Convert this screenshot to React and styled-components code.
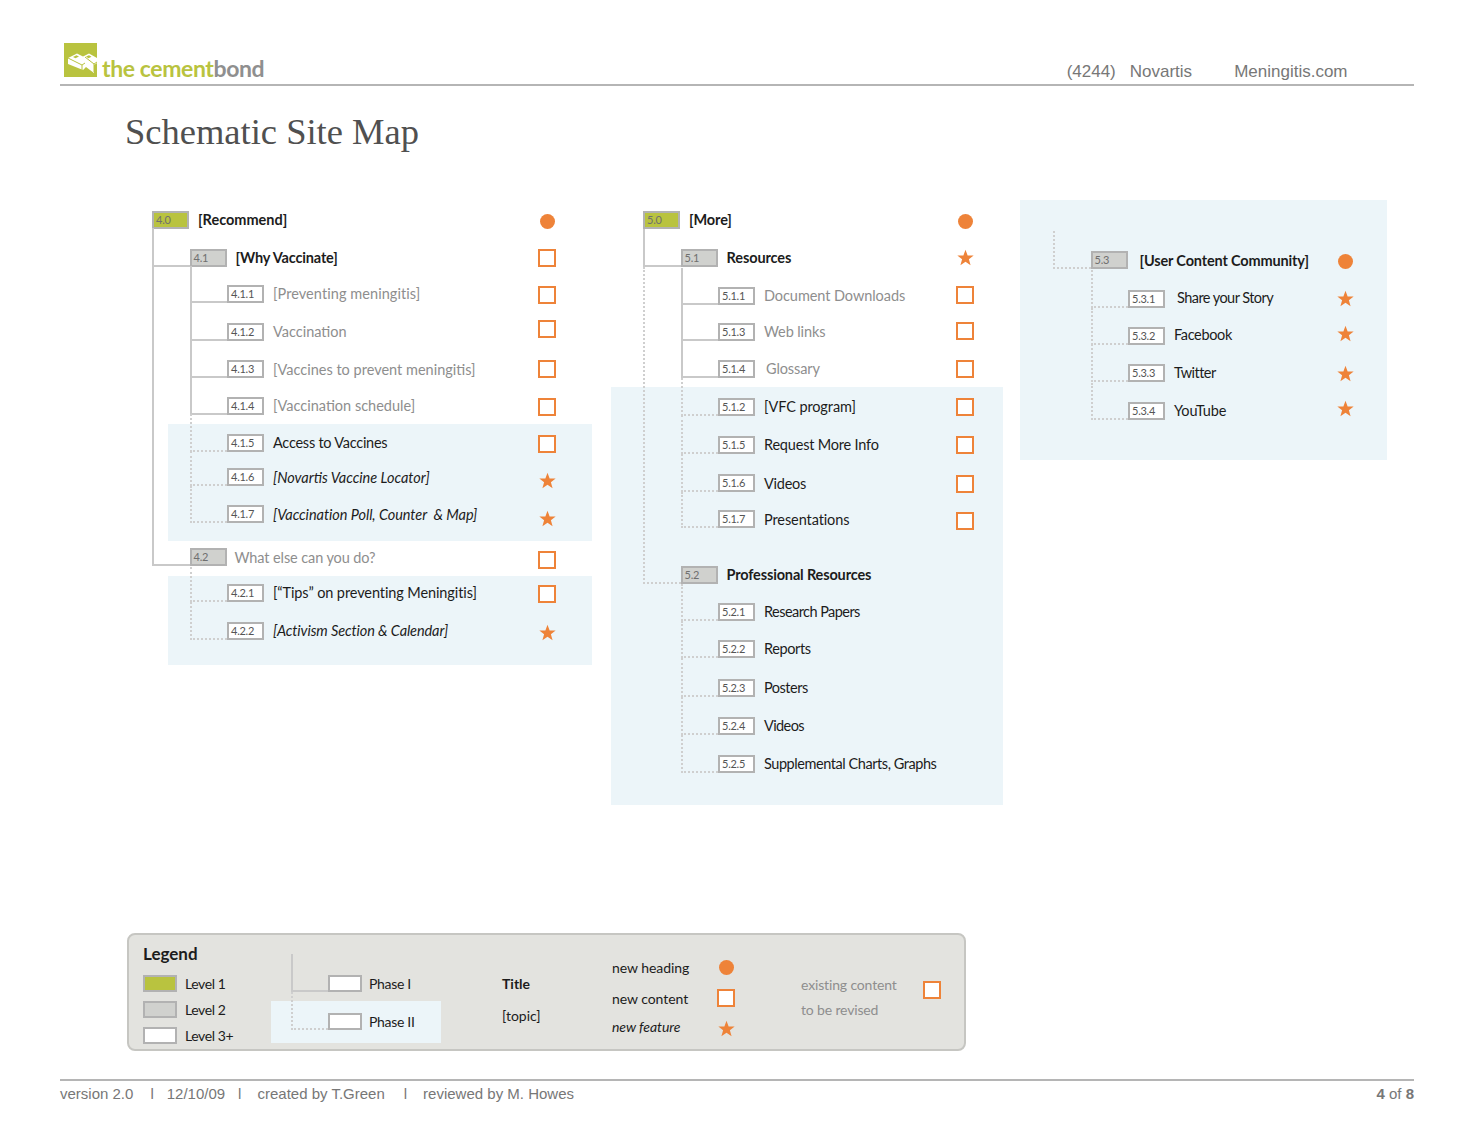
import React from 'react';
import styled, { createGlobalStyle } from 'styled-components';

const colors = {
    orange: '#ee8339',
    olive: '#b9c33f',
    shade: '#ecf5f9',
    line: '#c9c9c9',
    boxLine: '#b2b2b2',
    grey: '#8e8e8e',
    ink: '#1c1c1c',
};

const GlobalStyle = createGlobalStyle`
  html, body {
    margin: 0;
    padding: 0;
    background: #fff;
    font-family: "Lato", "Liberation Sans", sans-serif;
  }
`;

const Page = styled.div`
  width: 1480px;
  height: 1143px;
  overflow: hidden;
  padding-top: 43px;
  box-sizing: border-box;
`;

const Header = styled.header`
  margin-left: 60px;
  width: 1354px;
  height: 43px;
  box-sizing: border-box;
  border-bottom: 2px solid #b5b5b5;
  display: flex;
  justify-content: space-between;
  padding-left: 4px;
`;

const Brand = styled.div`
  display: flex;
  align-items: flex-start;
`;

const Wordmark = styled.div`
  margin: 11px 0 0 5px;
  font-family: "Lato", sans-serif;
  font-size: 23px;
  line-height: 28px;
  font-weight: 700;
  letter-spacing: -0.4px;
  color: ${colors.olive};
  span {
    color: #8f8f8f;
  }
`;

const Project = styled.div`
  display: flex;
  padding: 18px 66.5px 0 0;
  font-family: "Liberation Sans", sans-serif;
  font-size: 17px;
  line-height: 22px;
  color: #777;
`;

const ProjectItem = styled.span`
  margin-left: ${(props) => props.$gap}px;
`;

const Title = styled.h1`
  margin: 19px 0 0 125px;
  font-family: "Liberation Serif", serif;
  font-weight: 400;
  font-size: 36.5px;
  line-height: 54px;
  color: #505050;
`;

const MapArea = styled.main`
  margin: 41px 0 0 152px;
  height: 733px;
  display: flex;
  align-items: flex-start;
`;

const Column = styled.section`
  width: ${(props) => props.$width}px;
  margin-left: ${(props) => props.$left}px;
  padding-top: 11px;
  flex: none;
`;

const Shade = styled.div`
  background: ${colors.shade};
  margin-left: ${(props) => props.$bleed}px;
  padding-top: ${(props) => props.$pad}px;
  & > * {
    margin-left: ${(props) => -props.$bleed}px;
  }
`;

const Panel = styled.aside`
  flex: none;
  width: 367px;
  height: 260px;
  margin-left: 17px;
  padding: 51px 0 0 33px;
  box-sizing: border-box;
  background: ${colors.shade};
`;

const Row = styled.div`
  display: flex;
  align-items: flex-start;
  height: ${(props) => props.$h}px;
  margin-top: ${(props) => props.$top || 0}px;
  padding-left: ${(props) => props.$level * 37.5}px;
  padding-right: ${(props) => props.$gutter}px;
`;

const NodeBox = styled.div`
  position: relative;
  flex: none;
  width: 37px;
  height: 18px;
  box-sizing: border-box;
  border: 2px solid ${colors.boxLine};
  background: ${(props) => (props.$level === 0 ? colors.olive : props.$level === 1 ? '#d0d1ce' : '#fff')};
  color: ${(props) => (props.$level < 2 ? '#6f6f6f' : '#555')};
  font-size: 11px;
  letter-spacing: -0.25px;
  line-height: 14px;
  padding-left: 2px;
`;

const Elbow = styled.span`
  position: absolute;
  right: calc(100% + 2px);
  bottom: -2px;
  width: ${(props) => props.$w}px;
  height: ${(props) => props.$run}px;
  box-sizing: border-box;
  border-left: 2px ${(props) => (props.$dotted ? 'dotted #cfcfcf' : `solid ${colors.line}`)};
  border-bottom: 2px ${(props) => (props.$dotted ? 'dotted #cfcfcf' : `solid ${colors.line}`)};
`;

const NodeLabel = styled.span`
  margin: ${(props) => props.$shift || 0}px 0 0 ${(props) => props.$gap || 9}px;
  font-size: 14.5px;
  line-height: 18px;
  white-space: pre;
  letter-spacing: ${(props) => props.$track ?? -0.1}px;
  color: ${(props) => (props.$muted ? colors.grey : colors.ink)};
  font-weight: ${(props) => (props.$bold ? 700 : 400)};
  font-style: ${(props) => (props.$italic ? 'italic' : 'normal')};
`;

const MarkerSlot = styled.span`
  flex: none;
  width: 18px;
  height: 18px;
  margin-left: ${(props) => (props.$inline ? 0 : 'auto')};
  margin-top: ${(props) => props.$dy || 0}px;
  display: flex;
  align-items: center;
  justify-content: center;
`;

const Square = styled.span`
  width: 18px;
  height: 18px;
  box-sizing: border-box;
  border: 2px solid ${colors.orange};
  background: #fff;
`;

const Dot = styled.span`
  width: 15px;
  height: 15px;
  border-radius: 50%;
  background: ${colors.orange};
`;

const Star = () => (
    <svg width="17" height="17" viewBox="0 0 24 24">
        <polygon fill={colors.orange} points="12,1 15,9 23.5,9.3 16.8,14.5 19.2,23 12,18 4.8,23 7.2,14.5 0.5,9.3 9,9" />
    </svg>
);

const Marker = ({ kind, dy, inline }) => {
    if (!kind) return null;
    return (
        <MarkerSlot $dy={dy} $inline={inline}>
            {kind === 'dot' && <Dot />}
            {kind === 'square' && <Square />}
            {kind === 'star' && <Star />}
        </MarkerSlot>
    );
};

const Node = ({ gutter, row }) => (
    <Row $h={row.h} $top={row.top} $level={row.level} $gutter={gutter}>
        <NodeBox $level={row.level}>
            {row.run && <Elbow $w={row.level === 1 ? 38 : 37} $run={row.run} $dotted={row.dotted} />}
            {row.id}
        </NodeBox>
        <NodeLabel
            $gap={row.gap}
            $shift={row.shift}
            $muted={row.muted}
            $bold={row.bold}
            $italic={row.italic}
            $track={row.track}
        >
            {row.label}
        </NodeLabel>
        <Marker kind={row.mark} dy={row.dy} />
    </Row>
);

const recommendTop = [
    { id: '4.0', level: 0, h: 38, label: '[Recommend]', bold: true, track: 0, mark: 'dot', dy: 1 },
    { id: '4.1', level: 1, h: 36, run: 38, label: '[Why Vaccinate]', bold: true, track: -0.15, mark: 'square' },
    { id: '4.1.1', level: 2, h: 38, run: 37, label: '[Preventing meningitis]', muted: true, track: 0.07, mark: 'square', dy: 1 },
    { id: '4.1.2', level: 2, h: 37, run: 38, label: 'Vaccination', muted: true, track: 0, mark: 'square', dy: -3 },
    { id: '4.1.3', level: 2, h: 37, run: 37, label: '[Vaccines to prevent meningitis]', muted: true, track: 0, shift: 1, mark: 'square' },
    { id: '4.1.4', level: 2, h: 27, run: 37, label: '[Vaccination schedule]', muted: true, track: 0, mark: 'square', dy: 1 },
];
const recommendNew = [
    { id: '4.1.5', level: 2, h: 34, run: 38, dotted: true, label: 'Access to Vaccines', track: -0.25, mark: 'square', dy: 1 },
    { id: '4.1.6', level: 2, h: 37, run: 35, dotted: true, label: '[Novartis Vaccine Locator]', italic: true, track: 0, shift: 1, mark: 'star', dy: 3 },
    { id: '4.1.7', level: 2, h: 36, run: 37, dotted: true, label: '[Vaccination Poll, Counter  & Map]', italic: true, track: -0.05, shift: 1, mark: 'star', dy: 4 },
];
const recommendNext = { id: '4.2', level: 1, top: 7, h: 28, run: 338, label: 'What else can you do?', muted: true, gap: 8, shift: 1, mark: 'square', dy: 3 };
const recommendTips = [
    { id: '4.2.1', level: 2, h: 38, run: 35, dotted: true, label: '[“Tips” on preventing Meningitis]', mark: 'square', dy: 1 },
    { id: '4.2.2', level: 2, h: 43, run: 38, dotted: true, label: '[Activism Section & Calendar]', italic: true, mark: 'star', dy: 1 },
];

const moreTop = [
    { id: '5.0', level: 0, h: 38, label: '[More]', bold: true, mark: 'dot', dy: 1 },
    { id: '5.1', level: 1, h: 38, run: 38, label: 'Resources', bold: true, mark: 'star', dy: -1 },
    { id: '5.1.1', level: 2, h: 36, run: 37, label: 'Document Downloads', muted: true, track: -0.07, mark: 'square', dy: -1 },
    { id: '5.1.3', level: 2, h: 37, run: 36, label: 'Web links', muted: true, mark: 'square', dy: -1 },
    { id: '5.1.4', level: 2, h: 27, run: 37, label: 'Glossary', muted: true, gap: 11, mark: 'square' },
];
const moreNew = [
    { id: '5.1.2', level: 2, h: 38, run: 38, dotted: true, label: '[VFC program]', mark: 'square' },
    { id: '5.1.5', level: 2, h: 38, run: 39, dotted: true, label: 'Request More Info', track: -0.2, mark: 'square' },
    { id: '5.1.6', level: 2, h: 36, run: 38, dotted: true, label: 'Videos', track: -0.25, shift: 1, mark: 'square', dy: 1 },
    { id: '5.1.7', level: 2, h: 56, run: 36, dotted: true, label: 'Presentations', shift: 1, mark: 'square', dy: 2 },
    { id: '5.2', level: 1, h: 37, run: 317, dotted: true, label: 'Professional Resources', bold: true, track: -0.15 },
    { id: '5.2.1', level: 2, h: 37, run: 37, dotted: true, label: 'Research Papers', track: -0.55 },
    { id: '5.2.2', level: 2, h: 39, run: 37, dotted: true, label: 'Reports', track: -0.4 },
    { id: '5.2.3', level: 2, h: 38, run: 39, dotted: true, label: 'Posters', track: -0.5 },
    { id: '5.2.4', level: 2, h: 38, run: 38, dotted: true, label: 'Videos', track: -0.6 },
    { id: '5.2.5', level: 2, h: 50, run: 38, dotted: true, label: 'Supplemental Charts, Graphs', track: -0.44 },
];

const community = [
    { id: '5.3', level: 1, h: 39, run: 38, dotted: true, label: '[User Content Community]', bold: true, gap: 12, track: -0.15, shift: 1, mark: 'dot', dy: 1 },
    { id: '5.3.1', level: 2, h: 37, run: 38, dotted: true, label: 'Share your Story', gap: 12, track: -0.55, shift: -1, mark: 'star', dy: -1 },
    { id: '5.3.2', level: 2, h: 37, run: 37, dotted: true, label: 'Facebook', track: -0.35, shift: -1, mark: 'star', dy: -3 },
    { id: '5.3.3', level: 2, h: 38, run: 38, dotted: true, label: 'Twitter', track: -0.55, mark: 'star' },
    { id: '5.3.4', level: 2, h: 18, run: 37, dotted: true, label: 'YouTube', mark: 'star', dy: -3 },
];

const Legend = styled.section`
  margin-left: 127px;
  width: 839px;
  height: 118px;
  box-sizing: border-box;
  display: flex;
  background: #e3e3df;
  border: 2px solid #c6c6c2;
  border-radius: 8px;
  font-size: 14px;
  color: ${colors.ink};
`;

const LegendLevels = styled.div`
  flex: none;
  width: 142px;
  box-sizing: border-box;
  padding: 8px 0 0 14px;
`;

const LegendHeading = styled.div`
  font-size: 17px;
  line-height: 22px;
  font-weight: 700;
  margin-bottom: 5px;
`;

const LevelRow = styled.div`
  display: flex;
  align-items: center;
  height: 26px;
  letter-spacing: -0.4px;
`;

const Swatch = styled.span`
  flex: none;
  width: 34px;
  height: 17px;
  box-sizing: border-box;
  border: 2px solid ${colors.boxLine};
  background: ${(props) => props.$fill};
  margin-right: 8px;
`;

const LegendPhases = styled.div`
  flex: none;
  width: 170px;
  display: flex;
  flex-direction: column;
`;

const PhaseRow = styled.div`
  display: flex;
  align-items: flex-start;
  height: ${(props) => props.$h}px;
  box-sizing: border-box;
  padding: ${(props) => props.$pad}px 0 0 57px;
  line-height: 17px;
  letter-spacing: -0.3px;
  background: ${(props) => (props.$shaded ? colors.shade : 'transparent')};
`;

const PhaseBox = styled.span`
  position: relative;
  flex: none;
  width: 34px;
  height: 17px;
  box-sizing: border-box;
  border: 2px solid ${colors.boxLine};
  background: #fff;
  margin-right: 7px;
`;

const LegendTopics = styled.div`
  flex: none;
  width: 110px;
  margin-left: 61px;
  padding-top: 39px;
  box-sizing: border-box;
`;

const TopicLine = styled.div`
  height: ${(props) => props.$h}px;
  line-height: 20px;
  font-weight: ${(props) => (props.$bold ? 700 : 400)};
`;

const LegendKinds = styled.div`
  flex: none;
  width: 189px;
  box-sizing: border-box;
  padding-top: 23px;
`;

const KindRow = styled.div`
  display: flex;
  align-items: center;
  height: 18px;
  margin-bottom: ${(props) => props.$after || 0}px;
  font-style: ${(props) => (props.$italic ? 'italic' : 'normal')};
`;

const KindName = styled.span`
  flex: none;
  width: 105px;
  letter-spacing: -0.05px;
`;

const LegendRevised = styled.div`
  display: flex;
  align-items: flex-start;
  padding-top: 37px;
`;

const RevisedText = styled.div`
  width: 122px;
  line-height: 25px;
  letter-spacing: -0.15px;
  color: ${colors.grey};
`;

const Footer = styled.footer`
  margin: 28px 0 0 60px;
  width: 1354px;
  box-sizing: border-box;
  border-top: 2px solid #b5b5b5;
  padding-top: 3px;
  display: flex;
  justify-content: space-between;
  font-family: "Liberation Sans", sans-serif;
  font-size: 15px;
  line-height: 20px;
  color: #777;
`;

const FooterItem = styled.span`
  margin-right: ${(props) => props.$gap}px;
`;

const Pager = styled.span`
  b {
    font-weight: 700;
  }
`;

const BrickLogo = () => (
    <svg width="33" height="34" viewBox="0 0 33 34">
        <rect width="33" height="34" fill={colors.olive} />
        <path d="M4 15 L13 10.5 L19 13.5 L25 10.5 L33 15 L33 20 L30 22 L30 30 L22 24 L19 27 L4 21 Z" fill="#fff" />
        <path d="M4 15 L18 22 L18 27 M18 22 L21 20 M21 14 L30 21 L30 29 M30 21 L33 19" fill="none" stroke={colors.olive} strokeWidth="1" />
        <path d="M9 14 L12.5 12.2 L15 13.4 L11.5 15.2 Z M22 13.6 L25 12.2 L27.5 13.7 L24.5 15.2 Z" fill={colors.olive} />
    </svg>
);

const App = () => (
    <Page>
        <GlobalStyle />
        <Header>
            <Brand>
                <BrickLogo />
                <Wordmark>the cement<span>bond</span></Wordmark>
            </Brand>
            <Project>
                <ProjectItem $gap={0}>(4244)</ProjectItem>
                <ProjectItem $gap={14}>Novartis</ProjectItem>
                <ProjectItem $gap={42}>Meningitis.com</ProjectItem>
            </Project>
        </Header>
        <Title>Schematic Site Map</Title>
        <MapArea>
            <Column $width={440} $left={0}>
                {recommendTop.map((row) => <Node key={row.id} row={row} gutter={36} />)}
                <Shade $bleed={16} $pad={10}>
                    {recommendNew.map((row) => <Node key={row.id} row={row} gutter={36} />)}
                </Shade>
                <Node row={recommendNext} gutter={36} />
                <Shade $bleed={16} $pad={8}>
                    {recommendTips.map((row) => <Node key={row.id} row={row} gutter={36} />)}
                </Shade>
            </Column>
            <Column $width={360} $left={51}>
                {moreTop.map((row) => <Node key={row.id} row={row} gutter={29} />)}
                <Shade $bleed={-32} $pad={11}>
                    {moreNew.map((row) => <Node key={row.id} row={row} gutter={29} />)}
                </Shade>
            </Column>
            <Panel>
                {community.map((row) => <Node key={row.id} row={row} gutter={33} />)}
            </Panel>
        </MapArea>
        <Legend>
            <LegendLevels>
                <LegendHeading>Legend</LegendHeading>
                <LevelRow><Swatch $fill={colors.olive} />Level 1</LevelRow>
                <LevelRow><Swatch $fill="#d0d1ce" />Level 2</LevelRow>
                <LevelRow><Swatch $fill="#fff" />Level 3+</LevelRow>
            </LegendLevels>
            <LegendPhases>
                <PhaseRow $h={66} $pad={40}>
                    <PhaseBox><Elbow $w={37} $run={38} /></PhaseBox>Phase I
                </PhaseRow>
                <PhaseRow $h={42} $pad={12} $shaded>
                    <PhaseBox><Elbow $w={37} $run={38} $dotted /></PhaseBox>Phase II
                </PhaseRow>
            </LegendPhases>
            <LegendTopics>
                <TopicLine $h={32} $bold>Title</TopicLine>
                <TopicLine $h={20}>[topic]</TopicLine>
            </LegendTopics>
            <LegendKinds>
                <KindRow $after={13}><KindName>new heading</KindName><Marker kind="dot" inline /></KindRow>
                <KindRow $after={10}><KindName>new content</KindName><Marker kind="square" inline /></KindRow>
                <KindRow $italic><KindName>new feature</KindName><Marker kind="star" dy={5} inline /></KindRow>
            </LegendKinds>
            <LegendRevised>
                <RevisedText>existing content<br />to be revised</RevisedText>
                <Marker kind="square" dy={9} inline />
            </LegendRevised>
        </Legend>
        <Footer>
            <span>
                <FooterItem $gap={17}>version 2.0</FooterItem>
                <FooterItem $gap={13}>l</FooterItem>
                <FooterItem $gap={13}>12/10/09</FooterItem>
                <FooterItem $gap={16}>l</FooterItem>
                <FooterItem $gap={19}>created by T.Green</FooterItem>
                <FooterItem $gap={16}>l</FooterItem>
                <FooterItem $gap={0}>reviewed by M. Howes</FooterItem>
            </span>
            <Pager><b>4</b> of <b>8</b></Pager>
        </Footer>
    </Page>
);

export default App;
